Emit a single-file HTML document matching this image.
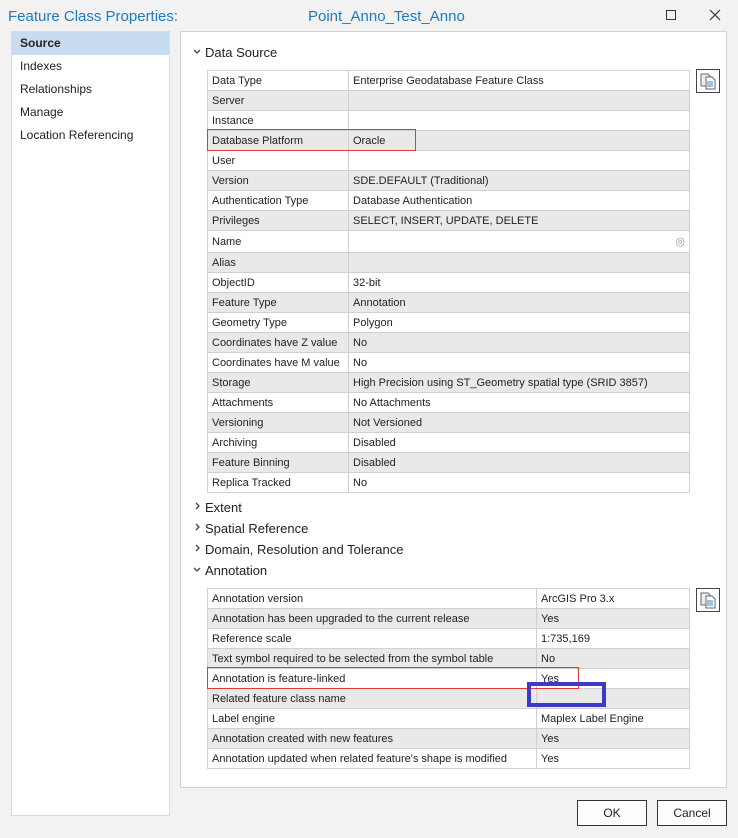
<!DOCTYPE html>
<html><head><style>
*{margin:0;padding:0;box-sizing:border-box}
body{width:738px;height:838px;background:#f2f2f2;font-family:"Liberation Sans",sans-serif;position:relative;overflow:hidden;color:#222}
.abs{position:absolute}
.title{font-size:15px;color:#1d7bc2;top:8px}
.nav{left:11px;top:31px;width:159px;height:785px;background:#fff;border:1px solid #dcdcdc}
.nav div{height:23px;line-height:23px;padding-left:8px;font-size:12px}
.nav .sel{background:#c7dcef;font-weight:bold}
.panel{left:180px;top:31px;width:547px;height:757px;background:#fff;border:1px solid #d4d4d4}
.h{font-size:13px;left:193px;color:#222}
.h svg{display:inline-block;width:12px;height:10px;vertical-align:0px}
table{position:absolute;border-collapse:collapse;font-size:11px;left:207px;width:483px}
td{border:1px solid #d0d0d0;height:20px;padding:0 4px;white-space:nowrap;overflow:hidden}
tr:nth-child(even) td{background:#e9e9e9}
.btn{top:800px;width:70px;height:26px;border:1px solid #333;background:#fdfdfd;font-size:12px;text-align:center;line-height:24px}
.copy{left:696px;width:24px;height:24px;border:1px solid #444;background:#fff}
</style></head><body>
<div class="abs title" style="left:8px">Feature Class Properties:</div>
<div class="abs title" style="left:308px">Point_Anno_Test_Anno</div>
<div class="abs" style="left:666px;top:10px;width:10px;height:10px;border:1px solid #333"></div>
<svg class="abs" style="left:709px;top:9px" width="12" height="12"><path d="M1 1L11 11M11 1L1 11" stroke="#333" stroke-width="1.2"/></svg>
<div class="abs nav"><div class="sel">Source</div><div>Indexes</div><div>Relationships</div><div>Manage</div><div>Location Referencing</div></div>
<div class="abs panel"></div>
<div class="abs h" style="top:45px"><svg><path d="M1 3L4 6L7 3" stroke="#444" fill="none" stroke-width="1.3"/></svg>Data Source</div>
<table style="top:70px"><colgroup><col style="width:141px"><col></colgroup>
<tr><td>Data Type</td><td>Enterprise Geodatabase Feature Class</td></tr>
<tr><td>Server</td><td></td></tr>
<tr><td>Instance</td><td></td></tr>
<tr><td>Database Platform</td><td>Oracle</td></tr>
<tr><td>User</td><td></td></tr>
<tr><td>Version</td><td>SDE.DEFAULT (Traditional)</td></tr>
<tr><td>Authentication Type</td><td>Database Authentication</td></tr>
<tr><td>Privileges</td><td>SELECT, INSERT, UPDATE, DELETE</td></tr>
<tr><td style="height:22px">Name</td><td style="text-align:right;color:#999">◎</td></tr>
<tr><td>Alias</td><td></td></tr>
<tr><td>ObjectID</td><td>32-bit</td></tr>
<tr><td>Feature Type</td><td>Annotation</td></tr>
<tr><td>Geometry Type</td><td>Polygon</td></tr>
<tr><td>Coordinates have Z value</td><td>No</td></tr>
<tr><td>Coordinates have M value</td><td>No</td></tr>
<tr><td>Storage</td><td>High Precision using ST_Geometry spatial type (SRID 3857)</td></tr>
<tr><td>Attachments</td><td>No Attachments</td></tr>
<tr><td>Versioning</td><td>Not Versioned</td></tr>
<tr><td>Archiving</td><td>Disabled</td></tr>
<tr><td>Feature Binning</td><td>Disabled</td></tr>
<tr><td>Replica Tracked</td><td>No</td></tr>
</table>
<div class="abs copy" style="top:69px"><svg width="22" height="22"><path d="M4 4h7l2 2v10H4z" fill="#eee" stroke="#666"/><path d="M9 7h6l3 3v9H9z" fill="#fff" stroke="#666"/><path d="M10 12h6M10 14h6M10 16h6" stroke="#3a8ad4"/></svg></div>
<div class="abs copy" style="top:588px"><svg width="22" height="22"><path d="M4 4h7l2 2v10H4z" fill="#eee" stroke="#666"/><path d="M9 7h6l3 3v9H9z" fill="#fff" stroke="#666"/><path d="M10 12h6M10 14h6M10 16h6" stroke="#3a8ad4"/></svg></div>
<div class="abs h" style="top:500px"><svg><path d="M3 1L6 4L3 7" stroke="#444" fill="none" stroke-width="1.3"/></svg>Extent</div>
<div class="abs h" style="top:521px"><svg><path d="M3 1L6 4L3 7" stroke="#444" fill="none" stroke-width="1.3"/></svg>Spatial Reference</div>
<div class="abs h" style="top:542px"><svg><path d="M3 1L6 4L3 7" stroke="#444" fill="none" stroke-width="1.3"/></svg>Domain, Resolution and Tolerance</div>
<div class="abs h" style="top:563px"><svg><path d="M1 3L4 6L7 3" stroke="#444" fill="none" stroke-width="1.3"/></svg>Annotation</div>
<table style="top:588px"><colgroup><col style="width:329px"><col></colgroup>
<tr><td>Annotation version</td><td>ArcGIS Pro 3.x</td></tr>
<tr><td>Annotation has been upgraded to the current release</td><td>Yes</td></tr>
<tr><td>Reference scale</td><td>1:735,169</td></tr>
<tr><td>Text symbol required to be selected from the symbol table</td><td>No</td></tr>
<tr><td>Annotation is feature-linked</td><td>Yes</td></tr>
<tr><td>Related feature class name</td><td></td></tr>
<tr><td>Label engine</td><td>Maplex Label Engine</td></tr>
<tr><td>Annotation created with new features</td><td>Yes</td></tr>
<tr><td>Annotation updated when related feature's shape is modified</td><td>Yes</td></tr>
</table>
<div class="abs" style="left:207px;top:129px;width:209px;height:22px;border:1px solid #e53935"></div>
<div class="abs" style="left:207px;top:667px;width:372px;height:22px;border:1px solid #e53935"></div>
<div class="abs" style="left:527px;top:682px;width:79px;height:25px;border:4px solid #3b3bc8"></div>
<div class="abs btn" style="left:577px">OK</div>
<div class="abs btn" style="left:657px">Cancel</div>
</body></html>
